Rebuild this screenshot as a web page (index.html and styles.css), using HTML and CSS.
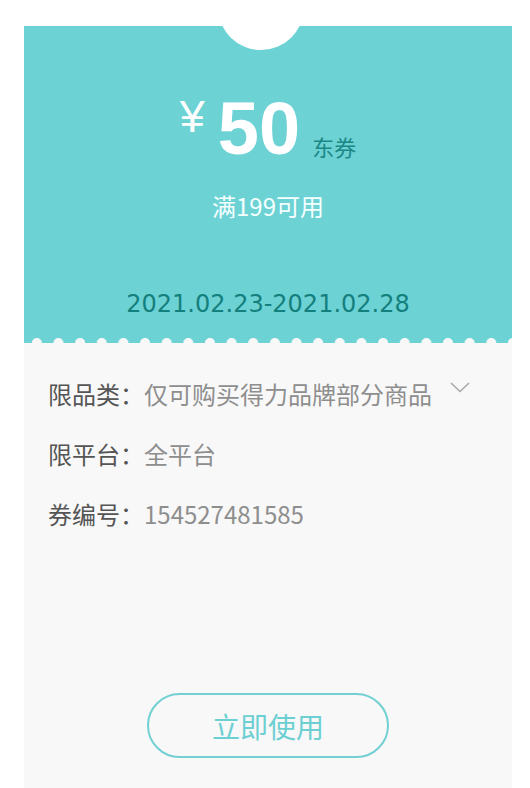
FILE: index.html
```html
<!DOCTYPE html>
<html lang="zh-CN">
<head>
<meta charset="utf-8">
<title>优惠券</title>
<link rel="stylesheet" href="styles.css">
</head>
<body>
<div class="coupon">
  <div class="coupon-top">
    <div class="notch"></div>
    <div class="amount">
      <span class="yen">¥</span>
      <span class="value">50</span>
      <span class="kind">东券</span>
    </div>
    <div class="cond">满199可用</div>
    <div class="date">2021.02.23-2021.02.28</div>
    <div class="scallop"></div>
  </div>
  <div class="coupon-body">
    <div class="row">
      <span class="label">限品类：</span>
      <span class="val">仅可购买得力品牌部分商品</span>
      <svg class="chev" width="20" height="11" viewBox="0 0 20 11"><path d="M1 1 L10 9.5 L19 1" fill="none" stroke="#aaaaaa" stroke-width="1.6"/></svg>
    </div>
    <div class="row">
      <span class="label">限平台：</span>
      <span class="val">全平台</span>
    </div>
    <div class="row">
      <span class="label">券编号：</span>
      <span class="val">154527481585</span>
    </div>
    <div class="btn-wrap">
      <button class="use-btn">立即使用</button>
    </div>
  </div>
</div>
</body>
</html>
```
FILE: styles.css
```css
html, body {
  margin: 0;
  padding: 0;
  background: #ffffff;
}
body {
  font-family: "Noto Sans CJK SC", "Noto Sans", sans-serif;
  height: 788px;
  overflow: hidden;
}
.coupon {
  margin: 26px 0 0 24px;
  width: 488px;
  height: 762px;
  background: #f8f8f8;
  display: flex;
  flex-direction: column;
}
.coupon-top {
  position: relative;
  height: 317px;
  background: #6dd2d4;
  display: flex;
  flex-direction: column;
  align-items: center;
  overflow: hidden;
}
.notch {
  position: absolute;
  left: 194px;
  top: -62px;
  width: 86px;
  height: 86px;
  border-radius: 50%;
  background: #ffffff;
}
.amount {
  margin-top: 67px;
  display: flex;
  align-items: baseline;
  height: 72px;
  line-height: 72px;
}
.yen {
  font-family: "Liberation Sans", sans-serif;
  font-size: 45px;
  color: #ffffff;
  position: relative;
  top: -22px;
  margin-right: 13px;
}
.value {
  font-family: "Liberation Sans", sans-serif;
  font-weight: bold;
  font-size: 74px;
  color: #ffffff;
  margin-right: 12px;
}
.kind {
  font-size: 22px;
  color: #1c8886;
  line-height: 22px;
  position: relative;
  top: 2px;
}
.cond {
  margin-top: 26px;
  font-size: 24px;
  line-height: 30px;
  color: #f4ffff;
}
.date {
  margin-top: 68px;
  font-family: "DejaVu Sans", sans-serif;
  font-size: 24px;
  line-height: 30px;
  color: #14807e;
}
.scallop {
  position: absolute;
  left: 0;
  right: 0;
  bottom: 0;
  height: 6px;
  background-image: radial-gradient(circle at 50% 100%, #f8f8f8 4.6px, rgba(248,248,248,0) 5.4px);
  background-size: 21.65px 6px;
  background-repeat: repeat-x;
  background-position: 2px 0;
}
.coupon-body {
  flex: 1;
  display: flex;
  flex-direction: column;
  padding: 36px 0 0 24px;
}
.row {
  display: flex;
  align-items: center;
  height: 30px;
  line-height: 30px;
  font-size: 24px;
  margin-bottom: 30px;
}
.label {
  color: #555555;
}
.val {
  color: #8e8e8e;
}
.chev {
  margin-left: 18px;
  margin-top: -14px;
}
.btn-wrap {
  margin-top: 134px;
  display: flex;
  justify-content: center;
  padding-right: 24px;
}
.use-btn {
  width: 242px;
  height: 65px;
  border: 2px solid #72cfd2;
  border-radius: 33px;
  background: transparent;
  color: #6ccfd2;
  font-family: "Noto Sans CJK SC", sans-serif;
  font-size: 28px;
  padding: 0;
}
```
